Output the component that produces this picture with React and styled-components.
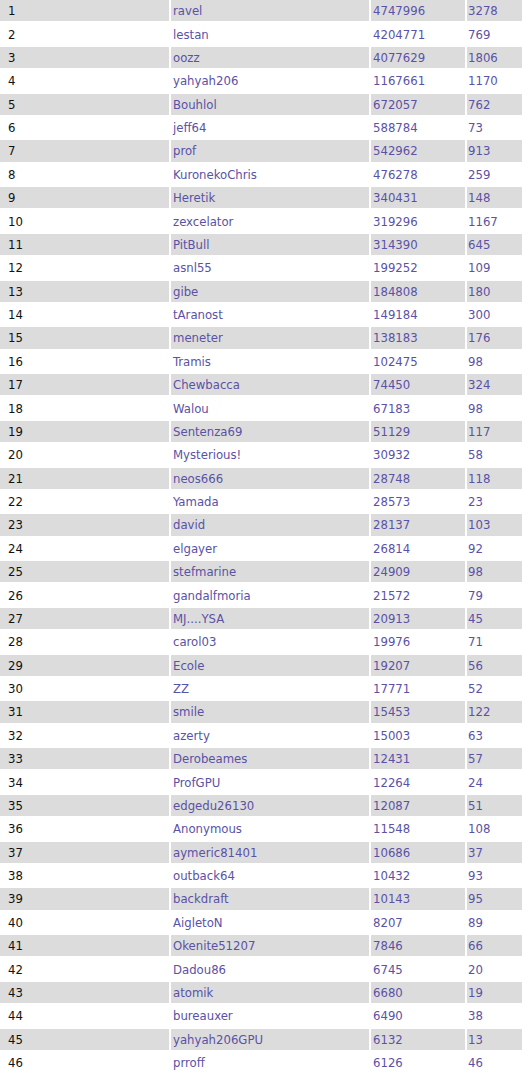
import React from "react";
import styled, { createGlobalStyle } from "styled-components";

const Global = createGlobalStyle`
  html, body { margin: 0; padding: 0; background: #ffffff; }
  body { font-family: "DejaVu Sans Condensed", "DejaVu Sans", sans-serif; font-stretch: condensed; }
`;

const data = [
  ["ravel", 4747996, 3278], ["lestan", 4204771, 769], ["oozz", 4077629, 1806],
  ["yahyah206", 1167661, 1170], ["Bouhlol", 672057, 762], ["jeff64", 588784, 73],
  ["prof", 542962, 913], ["KuronekoChris", 476278, 259], ["Heretik", 340431, 148],
  ["zexcelator", 319296, 1167], ["PitBull", 314390, 645], ["asnl55", 199252, 109],
  ["gibe", 184808, 180], ["tAranost", 149184, 300], ["meneter", 138183, 176],
  ["Tramis", 102475, 98], ["Chewbacca", 74450, 324], ["Walou", 67183, 98],
  ["Sentenza69", 51129, 117], ["Mysterious!", 30932, 58], ["neos666", 28748, 118],
  ["Yamada", 28573, 23], ["david", 28137, 103], ["elgayer", 26814, 92],
  ["stefmarine", 24909, 98], ["gandalfmoria", 21572, 79], ["MJ....YSA", 20913, 45],
  ["carol03", 19976, 71], ["Ecole", 19207, 56], ["ZZ", 17771, 52],
  ["smile", 15453, 122], ["azerty", 15003, 63], ["Derobeames", 12431, 57],
  ["ProfGPU", 12264, 24], ["edgedu26130", 12087, 51], ["Anonymous", 11548, 108],
  ["aymeric81401", 10686, 37], ["outback64", 10432, 93], ["backdraft", 10143, 95],
  ["AigletoN", 8207, 89], ["Okenite51207", 7846, 66], ["Dadou86", 6745, 20],
  ["atomik", 6680, 19], ["bureauxer", 6490, 38], ["yahyah206GPU", 6132, 13],
  ["prroff", 6126, 46],
];

const Board = styled.div`
  display: flex;
  flex-direction: column;
  gap: 2px;
  width: 522px;
`;

const Row = styled.div`
  display: grid;
  grid-template-columns: 169px 198px 94px 1fr;
  column-gap: 2px;
  height: 21.38px;
`;

const Cell = styled.div`
  display: flex;
  align-items: center;
  background: ${(p) => (p.$shaded ? "#dcdcdc" : "#ffffff")};
  color: ${(p) => (p.$link ? "#5a52a6" : "#111111")};
  padding-left: ${(p) => p.$pad}px;
  font-size: 13px;
  white-space: nowrap;
  overflow: hidden;
`;

export default function App() {
  return (
    <>
      <Global />
      <Board>
        {data.map(([name, score, count], i) => {
          const shaded = i % 2 === 0;
          return (
            <Row key={i}>
              <Cell $shaded={shaded} $pad={8}>{i + 1}</Cell>
              <Cell $shaded={shaded} $pad={2} $link>{name}</Cell>
              <Cell $shaded={shaded} $pad={2} $link>{score}</Cell>
              <Cell $shaded={shaded} $pad={1} $link>{count}</Cell>
            </Row>
          );
        })}
      </Board>
    </>
  );
}
